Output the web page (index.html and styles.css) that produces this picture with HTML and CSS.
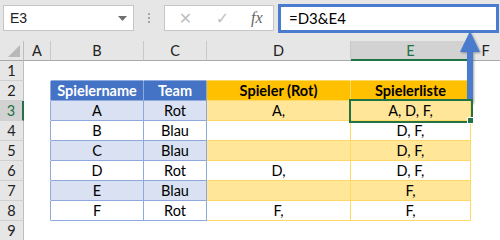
FILE: index.html
```html
<!DOCTYPE html>
<html lang="de">
<head>
<meta charset="UTF-8">
<title>Spielerliste</title>
<link rel="stylesheet" href="styles.css">
</head>
<body>
<div class="app">
    <div class="fbar">
        <div class="namebox">
            <span>E3</span>
            <svg class="drop" width="9" height="5" viewBox="0 0 9 5"><path d="M0 0H9L4.5 5Z" fill="#6f6f6f"/></svg>
        </div>
        <div class="grip"><i></i><i></i><i></i></div>
        <div class="btns">
            <span class="ico">✕</span>
            <span class="ico">✓</span>
            <span class="fx">fx</span>
        </div>
        <div class="formula">=D3&amp;E4</div>
    </div>

    <div class="sheet">
        <!-- Kopfzeile -->
        <div class="corner"><svg width="12" height="12" viewBox="0 0 12 12"><path d="M12 0V12H0Z" fill="#b8b8b8"/></svg></div>
        <div class="ch">A</div>
        <div class="ch">B</div>
        <div class="ch">C</div>
        <div class="ch">D</div>
        <div class="ch on">E</div>
        <div class="ch last">F</div>

        <!-- Zeile 1 -->
        <div class="rh">1</div>
        <div class="c"></div>
        <div class="c ub"></div>
        <div class="c ub"></div>
        <div class="c uo"></div>
        <div class="c uo"></div>
        <div class="c"></div>

        <!-- Zeile 2 -->
        <div class="rh">2</div>
        <div class="c lb"></div>
        <div class="c tb hb">Spielername</div>
        <div class="c tb hb">Team</div>
        <div class="c to ho">Spieler (Rot)</div>
        <div class="c to ho">Spielerliste</div>
        <div class="c"></div>

        <!-- Zeile 3 -->
        <div class="rh on">3</div>
        <div class="c lb"></div>
        <div class="c tb bb">A</div>
        <div class="c tb bb">Rot</div>
        <div class="c to bo">A,</div>
        <div class="c to bo sel">A, D, F,</div>
        <div class="c"></div>

        <!-- Zeile 4 -->
        <div class="rh">4</div>
        <div class="c lb"></div>
        <div class="c tb">B</div>
        <div class="c tb">Blau</div>
        <div class="c to"></div>
        <div class="c to">D, F,</div>
        <div class="c"></div>

        <!-- Zeile 5 -->
        <div class="rh">5</div>
        <div class="c lb"></div>
        <div class="c tb bb">C</div>
        <div class="c tb bb">Blau</div>
        <div class="c to bo"></div>
        <div class="c to bo">D, F,</div>
        <div class="c"></div>

        <!-- Zeile 6 -->
        <div class="rh">6</div>
        <div class="c lb"></div>
        <div class="c tb">D</div>
        <div class="c tb">Rot</div>
        <div class="c to">D,</div>
        <div class="c to">D, F,</div>
        <div class="c"></div>

        <!-- Zeile 7 -->
        <div class="rh">7</div>
        <div class="c lb"></div>
        <div class="c tb bb">E</div>
        <div class="c tb bb">Blau</div>
        <div class="c to bo"></div>
        <div class="c to bo">F,</div>
        <div class="c"></div>

        <!-- Zeile 8 -->
        <div class="rh">8</div>
        <div class="c lb"></div>
        <div class="c tb">F</div>
        <div class="c tb">Rot</div>
        <div class="c to">F,</div>
        <div class="c to">F,</div>
        <div class="c"></div>

        <!-- Zeile 9 -->
        <div class="rh">9</div>
        <div class="c"></div>
        <div class="c"></div>
        <div class="c"></div>
        <div class="c"></div>
        <div class="c"></div>
        <div class="c"></div>
    </div>

    <svg class="arrow" width="32" height="82" viewBox="0 0 32 82">
        <defs>
            <filter id="sh" x="-50%" y="-20%" width="200%" height="140%">
                <feDropShadow dx="1" dy="1" stdDeviation="1.2" flood-color="#000" flood-opacity="0.35"/>
            </filter>
        </defs>
        <g filter="url(#sh)">
            <rect x="12" y="22" width="6" height="53" fill="#4a7bcc"/>
            <path d="M15 3L25 24H5Z" fill="#4a7bcc"/>
        </g>
    </svg>
</div>
</body>
</html>
```

FILE: styles.css
```css
body {
    margin: 0;
    background: #fff;
    font-family: Lato, "Open Sans", "Liberation Sans", sans-serif;
    font-size: 14.5px;
    color: #000;
}

.app {
    position: relative;
    width: 500px;
    height: 240px;
    overflow: hidden;
}

/* Bearbeitungsleiste */
.fbar {
    height: 41px;
    background: #e6e6e6;
    display: flex;
    align-items: flex-start;
    box-sizing: border-box;
    padding-top: 5px;
}

.namebox {
    margin-left: 3px;
    width: 131px;
    height: 26px;
    box-sizing: border-box;
    background: #fff;
    border: 1px solid #c6c6c6;
    display: flex;
    align-items: center;
    justify-content: space-between;
    padding: 0 6px 0 6px;
    font-family: "Liberation Sans", sans-serif;
    font-size: 14px;
    color: #222;
}

.grip {
    width: 30px;
    height: 26px;
    display: flex;
    flex-direction: column;
    align-items: center;
    justify-content: center;
    gap: 2px;
}

.grip i {
    width: 2px;
    height: 2px;
    background: #a6a6a6;
}

.btns {
    width: 110px;
    height: 26px;
    box-sizing: border-box;
    background: #fff;
    border: 1px solid #c6c6c6;
    display: flex;
    align-items: center;
    padding-left: 12px;
    gap: 20px;
}

.ico {
    color: #c0c0c0;
    font-family: "DejaVu Sans", sans-serif;
    font-size: 16px;
    width: 17px;
    text-align: center;
}

.fx {
    font-family: "Liberation Serif", serif;
    font-style: italic;
    font-size: 16px;
    color: #666;
}

.formula {
    margin-left: 4px;
    width: 221px;
    height: 29px;
    margin-top: -1px;
    box-sizing: border-box;
    background: #fff;
    border: 3px solid #4a7bcc;
    padding-left: 8px;
    line-height: 23px;
    font-size: 15px;
}

/* Tabelle */
.sheet {
    display: grid;
    grid-template-columns: 24px 27px 93px 63px 144px 120px 29px;
    grid-auto-rows: 20px;
}

.sheet > div {
    box-sizing: border-box;
    border-right: 1px solid #fff;
    border-bottom: 1px solid #fff;
    display: flex;
    align-items: center;
    justify-content: center;
}

.sheet > .corner {
    background: #e6e6e6;
    border-right-color: #bdbdbd;
    border-bottom-color: #a9a9a9;
    align-items: flex-end;
    justify-content: flex-end;
    padding: 0 3px 3px 0;
}

.sheet > .ch {
    background: #e6e6e6;
    border-right-color: #c8c8c8;
    border-bottom-color: #a9a9a9;
    color: #222;
}

.sheet > .ch.last {
    border-right: 0;
}

.sheet > .ch.on {
    background: #d2d2d2;
    color: #217346;
    border-bottom: 2px solid #217346;
}

.sheet > .rh {
    background: #e6e6e6;
    border-right-color: #bdbdbd;
    border-bottom-color: #d0d0d0;
    color: #222;
}

.sheet > .rh.on {
    background: #d2d2d2;
    color: #217346;
    border-right: 2px solid #217346;
}

.sheet > .lb {
    border-right-color: #8ea9db;
}

.sheet > .ub {
    border-bottom-color: #8ea9db;
}

.sheet > .uo {
    border-bottom-color: #ffd966;
}

.sheet > .tb {
    border-color: #8ea9db;
}

.sheet > .to {
    border-color: #ffd966;
}

.sheet > .hb {
    background: #4472c4;
    color: #fff;
    font-weight: bold;
}

.sheet > .ho {
    background: #ffc000;
    font-weight: bold;
}

.sheet > .bb {
    background: #d9e1f2;
}

.sheet > .bo {
    background: #ffe699;
}

.sheet > .sel {
    position: relative;
    z-index: 1;
    outline: 2px solid #217346;
    outline-offset: 0;
}

.sel::after {
    content: "";
    position: absolute;
    right: -4px;
    bottom: -4px;
    width: 5px;
    height: 5px;
    background: #217346;
    border: 1px solid #fff;
}

.arrow {
    position: absolute;
    left: 455px;
    top: 28px;
}
```
